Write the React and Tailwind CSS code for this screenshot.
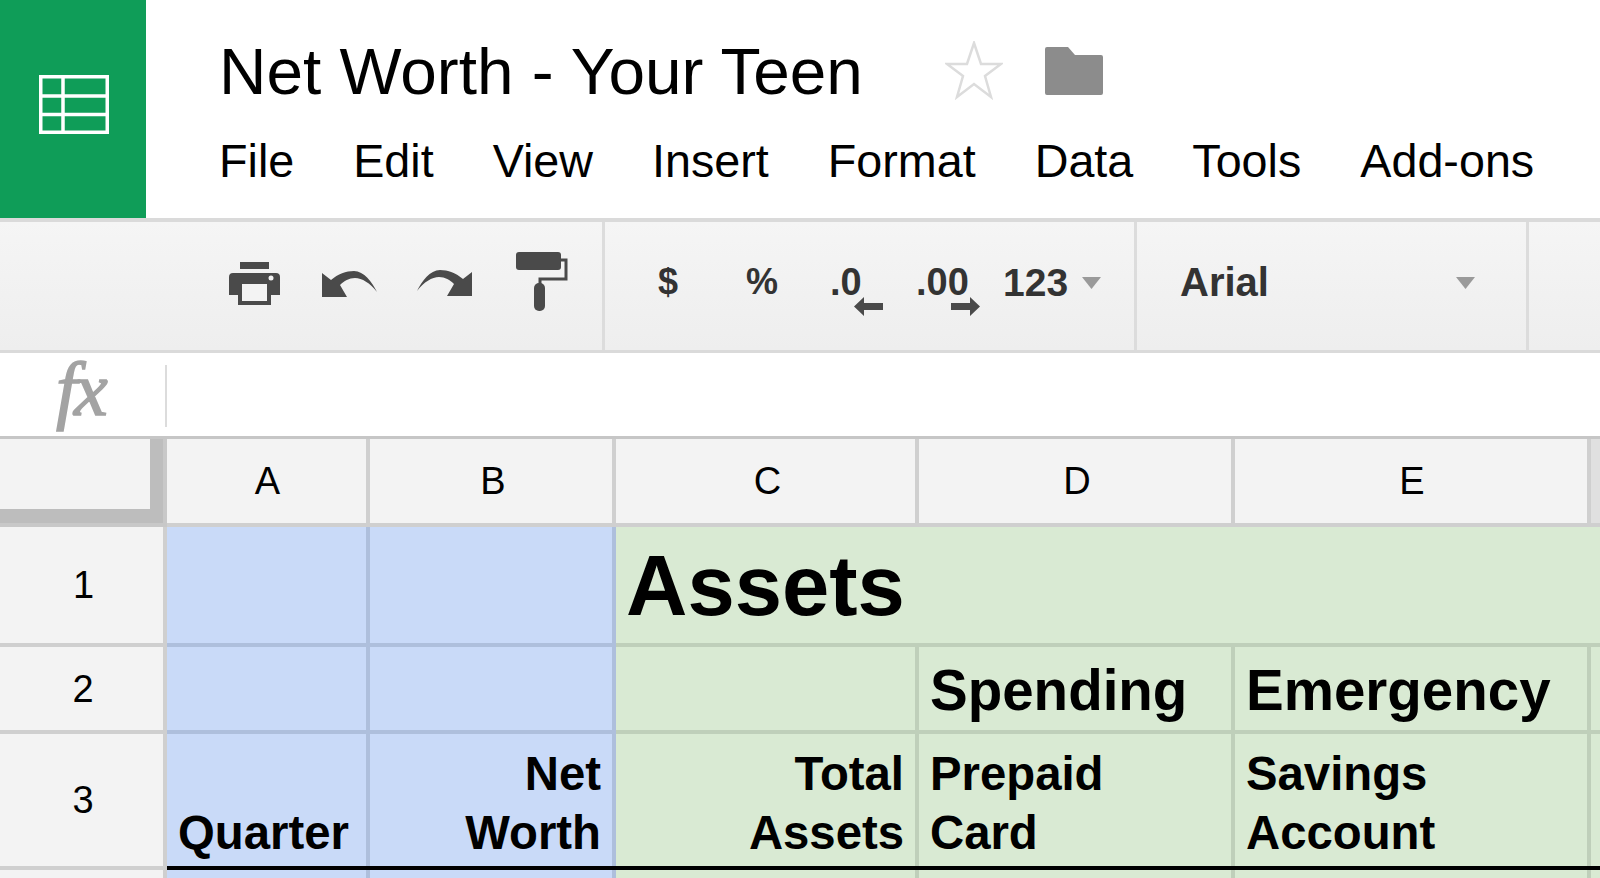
import React from 'react';

const Triangle = ({ className }) => (
  <svg width="19" height="12" viewBox="0 0 19 12" className={className}>
    <path d="M0 0H19L9.5 12Z" fill="#9a9a9a" />
  </svg>
);

const UndoIcon = ({ flip }) => (
  <svg width="55" height="27" viewBox="0 0 55 27" className={flip ? '-scale-x-100' : ''}>
    <path
      d="M0 2L9 9C16 3 24 0 32 0C42 0 50 11 55 21C48 12 40 7 33 7C27 7 22 10 18 14L25 26H0Z"
      fill="#4a4a4a"
    />
  </svg>
);

const LeftArrow = ({ flip, className }) => (
  <svg width="29" height="19" viewBox="0 0 29 19" className={`${flip ? '-scale-x-100' : ''} ${className}`}>
    <path d="M0 9.5L10 0V6H29V13H10V19Z" fill="#4a4a4a" />
  </svg>
);

const Toolbar = () => (
  <div className="flex h-[131px] border-b-[3px] border-[#dadada] bg-gradient-to-b from-[#f5f5f5] to-[#eeeeee]">
    <div className="flex w-[605px] items-center border-r-[3px] border-[#dcdcdc]">
      <svg width="51" height="43" viewBox="0 0 51 43" className="ml-[229px] -mt-[5px]">
        <rect x="11" y="0" width="29" height="7" fill="#4a4a4a" />
        <path d="M4 11H47Q51 11 51 15V33H42V43H9V33H0V15Q0 11 4 11Z" fill="#4a4a4a" />
        <rect x="13" y="22" width="25" height="17" fill="#f3f3f3" />
        <circle cx="42" cy="16" r="2.5" fill="#f3f3f3" />
      </svg>
      <div className="ml-[42px] -mt-[3px]">
        <UndoIcon />
      </div>
      <div className="ml-[40px] -mt-[6px]">
        <UndoIcon flip />
      </div>
      <svg width="52" height="59" viewBox="0 0 52 59" className="ml-[44px] -mt-[9px]">
        <rect x="0" y="0" width="45" height="18" rx="3" fill="#4a4a4a" />
        <path d="M44 8H50V27H24V34" fill="none" stroke="#4a4a4a" strokeWidth="3" />
        <rect x="18" y="31" width="11" height="28" rx="5" fill="#4a4a4a" />
      </svg>
    </div>
    <div className="flex w-[532px] items-center border-r-[3px] border-[#dcdcdc] pb-[8px] font-['Liberation_Sans',sans-serif] font-bold text-[#333333] leading-none">
      <span className="ml-[53px] text-[36px]">$</span>
      <span className="ml-[68px] text-[36px]">%</span>
      <div className="relative ml-[52px] w-[31px] text-[38px]">
        <span>.0</span>
        <LeftArrow className="absolute left-[24px] top-[34px]" />
      </div>
      <div className="relative ml-[55px] w-[51px] text-[38px]">
        <span>.00</span>
        <LeftArrow flip className="absolute left-[35px] top-[34px]" />
      </div>
      <span className="ml-[36px] text-[39px]">123</span>
      <Triangle className="ml-[14px] mt-[2px]" />
    </div>
    <div className="flex w-[392px] items-center border-r-[3px] border-[#dcdcdc] pb-[8px] font-['Liberation_Sans',sans-serif] font-bold text-[#333333] leading-none">
      <span className="ml-[43px] text-[40px]">Arial</span>
      <Triangle className="ml-[187px] mt-[2px]" />
    </div>
    <div className="flex-1" />
  </div>
);

const MENU = ['File', 'Edit', 'View', 'Insert', 'Format', 'Data', 'Tools', 'Add-ons'];

const Header = () => (
  <div className="flex h-[222px] border-b-[4px] border-[#dadada]">
    <div className="flex h-[218px] w-[146px] items-center justify-center bg-[#0f9d58]">
      <svg width="70" height="59" viewBox="0 0 70 59" className="ml-[1px] -mt-[9px]">
        <g fill="none" stroke="#ffffff" strokeWidth="3.5">
          <rect x="1.75" y="1.75" width="66.5" height="55.5" />
          <path d="M24 2V57M2 21H68M2 39.5H68" />
        </g>
      </svg>
    </div>
    <div className="pl-[73px] font-['Liberation_Sans',sans-serif] text-black">
      <div className="flex h-[108px] items-end">
        <h1 className="text-[65.7px] leading-none font-normal whitespace-nowrap pb-[3px]">Net Worth - Your Teen</h1>
        <svg width="58" height="59" viewBox="0 0 58 59" className="ml-[82px] mb-[8px]">
          <path
            d="M29 2L36 23H56L40 35L46 56L29 43L12 56L18 35L2 23H22Z"
            fill="#ffffff"
            stroke="#dcdcdc"
            strokeWidth="2.5"
          />
        </svg>
        <svg width="58" height="48" viewBox="0 0 58 48" className="ml-[42px] mb-[13px]">
          <path d="M2 0H23L30 8H56Q58 8 58 10V46Q58 48 56 48H2Q0 48 0 46V2Q0 0 2 0Z" fill="#8c8c8c" />
        </svg>
      </div>
      <nav className="flex gap-[59px] pt-[30px] text-[46.7px] leading-none whitespace-nowrap">
        {MENU.map((item) => (
          <span key={item}>{item}</span>
        ))}
      </nav>
    </div>
  </div>
);

const FormulaBar = () => (
  <div className="flex h-[86px] items-center border-b-[3px] border-[#c6c6c6] bg-white">
    <div className="w-[165px] pl-[56px] pb-[12px] font-['Liberation_Serif',serif] text-[76px] leading-none italic text-[#a3a3a3] tracking-[-3px] [-webkit-text-stroke:1.5px_#a3a3a3]">
      fx
    </div>
    <div className="h-[62px] w-[2px] translate-y-[1px] bg-[#dcdcdc]" />
  </div>
);

const HeadCell = ({ children, right = true, bottom = true, className = '' }) => (
  <div
    className={`flex items-center justify-center text-[38px] text-black border-[#cfcfcf] ${right ? 'border-r-[4px]' : ''} ${bottom ? 'border-b-[4px]' : ''} ${className}`}
  >
    {children}
  </div>
);

const Cell = ({ children, tone, right = true, bottom = true, className = '' }) => (
  <div
    className={`font-bold leading-[59px] text-[47.3px] text-black ${right ? 'border-r-[4px]' : ''} ${bottom ? 'border-b-[4px]' : ''} ${tone === 'blue' ? 'bg-[#c9daf8] border-[#aebfdc]' : 'bg-[#d9ead3] border-[#bfcfba]'} ${className}`}
  >
    {children}
  </div>
);

const Sheet = () => (
  <div className="grid grid-cols-[167px_203px_246px_303px_316px_356px_1fr] grid-rows-[88px_120px_87px_132px_4px_1fr] h-[439px] overflow-hidden font-['Liberation_Sans',sans-serif]">
    {/* Column header row */}
    <div className="border-r-[4px] border-b-[4px] border-[#c8c8c8] bg-[#f3f3f3]">
      <div className="h-full border-r-[13px] border-b-[14px] border-[#bdbdbd]" />
    </div>
    <HeadCell className="bg-[#f3f3f3] pl-[2px]">A</HeadCell>
    <HeadCell className="bg-[#f3f3f3] pl-[4px]">B</HeadCell>
    <HeadCell className="bg-[#f3f3f3] pl-[4px]">C</HeadCell>
    <HeadCell className="bg-[#f3f3f3] pl-[4px]">D</HeadCell>
    <HeadCell className="bg-[#f3f3f3] pl-[2px]">E</HeadCell>
    <HeadCell right={false} className="bg-[#e0e0e0]" />

    {/* Row 1 */}
    <HeadCell className="bg-[#f3f3f3] pl-[4px]">1</HeadCell>
    <Cell tone="blue" />
    <Cell tone="blue" />
    <Cell tone="green" right={false} className="col-span-4 flex items-center pl-[10px]">
      <span className="text-[85px] leading-none">Assets</span>
    </Cell>

    {/* Row 2 */}
    <HeadCell className="bg-[#f3f3f3] pl-[3px] pt-[2px]">2</HeadCell>
    <Cell tone="blue" />
    <Cell tone="blue" />
    <Cell tone="green" />
    <Cell tone="green" className="flex items-center pl-[11px] pt-[6px]">
      <span className="text-[56.5px] leading-none">Spending</span>
    </Cell>
    <Cell tone="green" className="flex items-center pl-[11px] pt-[6px]">
      <span className="text-[56.5px] leading-none whitespace-nowrap">Emergency</span>
    </Cell>
    <Cell tone="green" right={false} />

    {/* Row 3 */}
    <HeadCell bottom={false} className="bg-[#f3f3f3] pl-[3px]">3</HeadCell>
    <Cell tone="blue" bottom={false} className="flex items-end pl-[11px] pb-[4px]">
      Quarter
    </Cell>
    <Cell tone="blue" bottom={false} className="flex flex-col items-end justify-end pr-[11px] pb-[4px]">
      <span>Net</span>
      <span>Worth</span>
    </Cell>
    <Cell tone="green" bottom={false} className="flex flex-col items-end justify-end pr-[11px] pb-[4px]">
      <span>Total</span>
      <span>Assets</span>
    </Cell>
    <Cell tone="green" bottom={false} className="flex flex-col justify-end pl-[11px] pb-[4px]">
      <span>Prepaid</span>
      <span>Card</span>
    </Cell>
    <Cell tone="green" bottom={false} className="flex flex-col justify-end pl-[11px] pb-[4px]">
      <span>Savings</span>
      <span>Account</span>
    </Cell>
    <Cell tone="green" bottom={false} right={false} />

    {/* Black rule under the frozen rows */}
    <div className="bg-[#cfcfcf]" />
    <div className="col-span-6 bg-black" />

    {/* Row 4, cut off by the window */}
    <HeadCell bottom={false} className="bg-[#f3f3f3]" />
    <Cell tone="blue" bottom={false} />
    <Cell tone="blue" bottom={false} />
    <Cell tone="green" bottom={false} />
    <Cell tone="green" bottom={false} />
    <Cell tone="green" bottom={false} />
    <Cell tone="green" bottom={false} right={false} />
  </div>
);

export default function App() {
  return (
    <div className="h-[878px] w-[1600px] overflow-hidden bg-white">
      <Header />
      <Toolbar />
      <FormulaBar />
      <Sheet />
    </div>
  );
}
